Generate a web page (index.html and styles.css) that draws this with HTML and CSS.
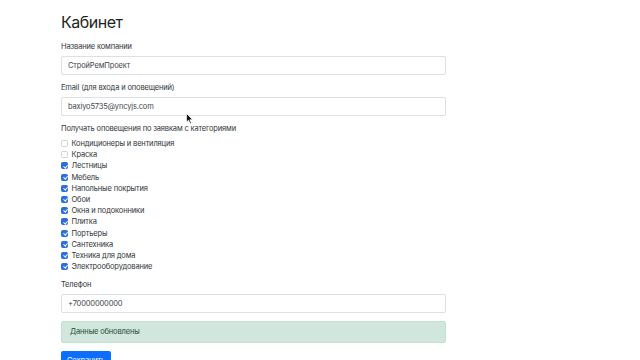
FILE: index.html
```html
<!DOCTYPE html>
<html lang="ru">
<head>
<meta charset="utf-8">
<link rel="stylesheet" href="styles.css">
</head>
<body>
<div class="page">
  <h1 class="title">Кабинет</h1>
  <div class="field">
    <label class="label">Название компании</label>
    <div class="input">СтройРемПроект</div>
  </div>
  <div class="field">
    <label class="label">Email (для входа и оповещений)</label>
    <div class="input">baxiyo5735@yncyjs.com</div>
  </div>
  <div class="field">
    <div class="label">Получать оповещения по заявкам с категориями</div>
    <ul class="checks">
      <li class="check"><span class="box"></span>Кондиционеры и вентиляция</li>
      <li class="check"><span class="box"></span>Краска</li>
      <li class="check"><span class="box on"></span>Лестницы</li>
      <li class="check"><span class="box on"></span>Мебель</li>
      <li class="check"><span class="box on"></span>Напольные покрытия</li>
      <li class="check"><span class="box on"></span>Обои</li>
      <li class="check"><span class="box on"></span>Окна и подоконники</li>
      <li class="check"><span class="box on"></span>Плитка</li>
      <li class="check"><span class="box on"></span>Портьеры</li>
      <li class="check"><span class="box on"></span>Сантехника</li>
      <li class="check"><span class="box on"></span>Техника для дома</li>
      <li class="check"><span class="box on"></span>Электрооборудование</li>
    </ul>
  </div>
  <div class="field phone">
    <label class="label">Телефон</label>
    <div class="input">+70000000000</div>
  </div>
  <div class="alert">Данные обновлены</div>
  <button class="btn">Сохранить</button>
</div>
<svg class="cursor" width="8" height="12" viewBox="0 0 8 12"><path d="M0.5 0.5 L0.5 9 L2.6 7.2 L4 10.6 L5.3 10 L3.9 6.8 L6.6 6.7 Z" fill="#111" stroke="#fff" stroke-width="0.7"/></svg>
</body>
</html>
```

FILE: styles.css
```css
* { box-sizing: border-box; }
html, body { margin: 0; padding: 0; background: #fff; }
body {
  font-family: Inter, "Liberation Sans", Arial, sans-serif;
  color: #30353a;
  font-size: 7.5px;
  letter-spacing: -0.15px;
  line-height: 12px;
  width: 640px;
  height: 360px;
  overflow: hidden;
  position: relative;
}
.page {
  margin-left: 61px;
  width: 385px;
  padding-top: 11px;
}
.title {
  margin: 0 0 8px 0;
  font-size: 16px;
  letter-spacing: -0.5px;
  line-height: 22px;
  font-weight: 400;
  color: #1c1f23;
}
.field { margin-bottom: 7px; }
.label { display: block; margin-bottom: 3px; }
.input {
  height: 19px;
  border: 1px solid #dcdfe3;
  border-radius: 2px;
  padding: 0 6px;
  line-height: 17px;
  color: #42474d;
}
.checks { list-style: none; margin: 2px 0 0 0; padding: 0; }
.check {
  display: flex;
  align-items: center;
  height: 11.2px;
  line-height: 11.2px;
}
.box {
  width: 7px;
  height: 7px;
  border: 1px solid #cfd3d8;
  border-radius: 1.5px;
  margin-right: 3.5px;
  flex: none;
  position: relative;
}
.box.on {
  background: #2c6ee0;
  border-color: #2c6ee0;
}
.box.on::after {
  content: "";
  position: absolute;
  left: 1.6px;
  top: 0.2px;
  width: 1.6px;
  height: 3.4px;
  border: solid #fff;
  border-width: 0 1.1px 1.1px 0;
  transform: rotate(40deg);
}
.phone { margin-top: 7px; margin-bottom: 8px; }
.alert {
  height: 22px;
  background: #d1e7dd;
  border: 1px solid #c4e0d2;
  border-radius: 2px;
  padding: 0 8px;
  line-height: 20px;
  color: #1f4d36;
  margin-bottom: 8px;
}
.btn {
  font-family: inherit;
  font-size: 7.5px;
  letter-spacing: -0.15px;
  background: #0d6efd;
  border: 0;
  border-radius: 2px;
  color: #fff;
  height: 19px;
  padding: 0 6px;
  vertical-align: top;
}
.cursor { position: absolute; left: 186px; top: 113px; }
```
